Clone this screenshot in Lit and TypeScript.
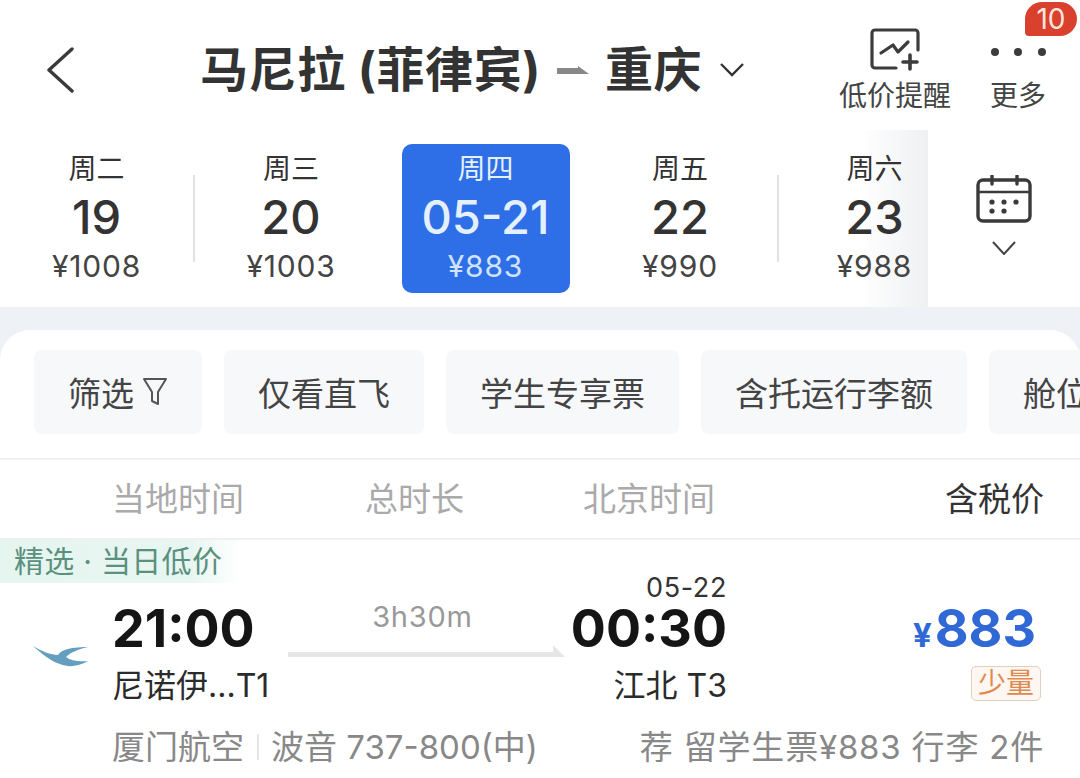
import { css, html, LitElement, TemplateResult } from "lit";
import { customElement } from "lit/decorators.js";
import { classMap } from "lit/directives/class-map.js";

const days = [
  { week: "周二", date: "19", price: "¥1008" },
  { week: "周三", date: "20", price: "¥1003" },
  { week: "周四", date: "05-21", price: "¥883", active: true },
  { week: "周五", date: "22", price: "¥990" },
  { week: "周六", date: "23", price: "¥988" },
];

const filters = ["仅看直飞", "学生专享票", "含托运行李额", "舱位"];

@customElement("app-root")
export default class AppRoot extends LitElement {
  static styles = css`
    :host {
      display: block;
      width: 1080px;
      height: 778px;
      overflow: hidden;
      background: #fff;
      color: #333;
      font-family: Inter, "Noto Sans CJK SC", sans-serif;
    }

    svg {
      display: block;
      flex: none;
    }

    .header {
      height: 130px;
      display: flex;
      box-sizing: border-box;
      padding: 0 34px 0 46px;
    }

    .back {
      margin-top: 47px;
    }

    .title {
      display: flex;
      align-items: center;
      height: 132px;
      margin-left: 124px;
      font-size: 48px;
      font-weight: 700;
      letter-spacing: 0.6px;
      color: #333;
      white-space: nowrap;
    }

    .title svg {
      margin-top: 8px;
    }

    .title .dash {
      margin-left: 16px;
      margin-right: 16px;
    }

    .title .chev {
      margin-left: 18px;
    }

    .action {
      position: relative;
      display: flex;
      flex-direction: column;
      align-items: center;
      font-size: 28px;
      line-height: 40px;
      color: #444;
    }

    .alert {
      margin-left: auto;
      width: 112px;
      padding-top: 28px;
    }

    .alert svg {
      margin-bottom: 4px;
    }

    .more {
      margin-left: 39px;
      width: 56px;
      padding-top: 47px;
    }

    .more svg {
      margin-bottom: 19px;
    }

    .badge {
      position: absolute;
      left: 35px;
      top: 2px;
      width: 52px;
      height: 34px;
      border-radius: 17px 17px 17px 4px;
      background: #d9402e;
      color: #fbe6dc;
      font-size: 28px;
      line-height: 35px;
      text-align: center;
    }

    .dates-row {
      display: flex;
      height: 177px;
    }

    .dates {
      width: 928px;
      flex: none;
      display: flex;
      overflow: hidden;
      background: linear-gradient(to right, #fff 860px, #eef0f2);
    }

    .day {
      flex: none;
      width: 193px;
      display: flex;
      justify-content: center;
      padding-top: 14px;
    }

    .sep {
      flex: none;
      width: 2px;
      height: 87px;
      margin-top: 45px;
      margin-right: -0.5px;
      background: #e2e2e2;
    }

    .sep.hidden {
      background: transparent;
    }

    .day-box {
      width: 168px;
      height: 149px;
      display: flex;
      flex-direction: column;
      align-items: center;
      border-radius: 10px;
    }

    .day-box.active {
      background: #2e6ee6;
      color: #e4f1fd;
    }

    .week {
      font-size: 28px;
      line-height: 50px;
      height: 48px;
    }

    .date {
      font-size: 47px;
      font-weight: 500;
      line-height: 50px;
    }

    .price {
      font-size: 30px;
      line-height: 48px;
      letter-spacing: 0.8px;
      color: #444;
    }

    .active .price {
      color: #cfe3fb;
    }

    .calendar {
      flex: 1;
      display: flex;
      flex-direction: column;
      align-items: center;
      padding-top: 45px;
      gap: 18px;
      box-sizing: border-box;
    }

    .band {
      background: #eef2f6;
      padding-top: 23px;
    }

    .card {
      background: #fff;
      border-radius: 30px 30px 0 0;
      padding-top: 20px;
    }

    .chips {
      display: flex;
      gap: 22px;
      padding: 0 0 24px 34px;
      overflow: hidden;
      border-bottom: 2px solid #eff0f2;
    }

    .chip {
      flex: none;
      height: 84px;
      box-sizing: border-box;
      display: flex;
      align-items: center;
      padding: 0 34px;
      gap: 8px;
      background: #f7f8fa;
      border-radius: 8px;
      font-size: 33px;
      color: #444;
      white-space: nowrap;
    }

    .sort {
      display: grid;
      grid-template-columns: 253px 218px 1fr auto;
      height: 80px;
      box-sizing: border-box;
      padding: 0 36px 4px 112px;
      align-items: center;
      font-size: 33px;
      color: #aaa;
      border-bottom: 2px solid #eff0f2;
    }

    .sort .tax {
      color: #333;
    }

    .tag {
      width: 240px;
      height: 43px;
      box-sizing: border-box;
      padding-left: 14px;
      font-size: 30px;
      line-height: 42px;
      letter-spacing: 0.3px;
      color: #5b907e;
      white-space: nowrap;
      background: linear-gradient(to right, #e5f5ef, #e8f6f1 80%, rgba(255, 255, 255, 0));
    }

    .flight {
      display: grid;
      grid-template-columns: 112px 176px 277px 162px 1fr;
      margin-top: -10px;
      height: 152px;
    }

    .logo {
      padding: 73px 0 0 33px;
    }

    .time {
      font-size: 52px;
      font-weight: 700;
      line-height: 52px;
      color: #151515;
      white-space: nowrap;
    }

    .place {
      font-size: 32px;
      line-height: 44px;
      white-space: nowrap;
      margin-top: 9px;
      color: #2b2b2b;
    }

    .depart {
      padding-top: 30px;
    }

    .middle {
      display: flex;
      flex-direction: column;
      align-items: center;
      font-size: 29px;
      letter-spacing: 0.8px;
      color: #999;
      padding-top: 26px;
      line-height: 36px;
    }

    .middle span {
      margin-right: 8px;
    }

    .middle svg {
      margin-top: 10px;
    }

    .arrive {
      display: flex;
      flex-direction: column;
      align-items: flex-end;
    }

    .next {
      font-size: 27px;
      line-height: 30px;
      letter-spacing: 0.6px;
      color: #333;
      height: 30px;
    }

    .fare {
      display: flex;
      flex-direction: column;
      align-items: flex-end;
      padding: 30px 44px 0 0;
    }

    .amount {
      display: flex;
      align-items: baseline;
      gap: 3px;
      color: #3069d6;
      font-size: 52px;
      font-weight: 700;
      line-height: 52px;
    }

    .amount span {
      font-size: 33px;
    }

    .low {
      margin: 5px -5px 0 0;
      width: 70px;
      height: 35px;
      box-sizing: border-box;
      border: 1px solid #e3cfc2;
      border-radius: 5px;
      background: #fdf6f1;
      color: #e0894f;
      font-size: 28px;
      line-height: 32px;
      text-align: center;
    }

    .meta {
      display: flex;
      justify-content: space-between;
      padding: 0 36px 0 112px;
      font-size: 33px;
      line-height: 44px;
      color: #888;
      white-space: nowrap;
    }

    .meta .left {
      display: flex;
      align-items: center;
    }

    .meta .perk {
      letter-spacing: 0.8px;
    }

    .meta i {
      width: 2px;
      height: 26px;
      margin: 0 12px 0 13px;
      background: #e6e6e6;
    }
  `;

  render() {
    return html`
      ${this.header()}
      <div class="dates-row">
        <div class="dates">${days.map((d, i) => this.day(d, i))}</div>
        <div class="calendar">
          ${this.calendarIcon()}
          <svg width="24" height="14" viewBox="0 0 24 14" fill="none" stroke="#444" stroke-width="2">
            <path d="M1 1l11 12L23 1" />
          </svg>
        </div>
      </div>
      <div class="band">
        <div class="card">
          <div class="chips">
            <div class="chip">
              筛选
              <svg width="26" height="30" viewBox="0 0 26 30" fill="none" stroke="#555" stroke-width="2" stroke-linejoin="round">
                <path d="M2 2h22L16 15v12l-6-3v-9z" />
              </svg>
            </div>
            ${filters.map((f) => html`<div class="chip">${f}</div>`)}
          </div>
          <div class="sort">
            <span>当地时间</span><span>总时长</span><span>北京时间</span>
            <span class="tax">含税价</span>
          </div>
          <div class="tag">精选 · 当日低价</div>
          ${this.flight()}
          <div class="meta">
            <div class="left">厦门航空<i></i>波音 737-800(中)</div>
            <div class="perk">荐 留学生票¥883 行李 2件</div>
          </div>
        </div>
      </div>
    `;
  }

  header(): TemplateResult {
    return html`
      <div class="header">
        <svg class="back" width="30" height="46" viewBox="0 0 30 46" fill="none" stroke="#3a3a3a" stroke-width="3.4" stroke-linecap="round" stroke-linejoin="round">
          <path d="M26 2L3 23l23 21" />
        </svg>
        <div class="title">
          马尼拉 (菲律宾)
          <svg class="dash" width="32" height="8" viewBox="0 0 32 8"><path d="M0 2h21V0l11 8H0z" fill="#888" /></svg>
          重庆
          <svg class="chev" width="24" height="14" viewBox="0 0 24 14" fill="none" stroke="#333" stroke-width="2.4"><path d="M1 1l11 11L23 1" /></svg>
        </div>
        <div class="action alert">
          <svg width="50" height="44" viewBox="0 0 50 44" fill="none" stroke="#3c3c3c" stroke-width="3.2" stroke-linecap="round" stroke-linejoin="round">
            <path d="M48 22V5a3 3 0 0 0-3-3H5a3 3 0 0 0-3 3v32a3 3 0 0 0 3 3h21" />
            <path d="M11 25l12-8 5 7 10-10" />
            <path d="M40 27v14M33 34h14" stroke-width="3.6" />
          </svg>
          低价提醒
        </div>
        <div class="action more">
          <svg width="56" height="10" viewBox="0 0 56 10" fill="#3c3c3c">
            <circle cx="5" cy="5" r="4" /><circle cx="28" cy="5" r="4" /><circle cx="52" cy="5" r="4" />
          </svg>
          更多
          <div class="badge">10</div>
        </div>
      </div>
    `;
  }

  day(d: (typeof days)[number], i: number): TemplateResult {
    const active = !!d.active;
    const nearActive = active || !!days[i + 1]?.active;

    return html`
      <div class="day">
        <div class="day-box ${classMap({ active })}">
          <div class="week">${d.week}</div>
          <div class="date">${d.date}</div>
          <div class="price">${d.price}</div>
        </div>
      </div>
      ${i < days.length - 1
        ? html`<div class="sep ${classMap({ hidden: nearActive })}"></div>`
        : ""}
    `;
  }

  calendarIcon(): TemplateResult {
    return html`
      <svg width="56" height="48" viewBox="0 0 56 48" fill="none" stroke="#3a3a3a" stroke-width="3.4">
        <rect x="2" y="5" width="52" height="41" rx="5" />
        <path d="M2 17h52" stroke-width="2.4" />
        <path d="M16 1v8M41 1v8" stroke-linecap="round" />
        <g fill="#3a3a3a" stroke="none">
          <circle cx="16" cy="27" r="2.6" /><circle cx="28" cy="27" r="2.6" /><circle cx="40" cy="27" r="2.6" />
          <circle cx="16" cy="36" r="2.6" /><circle cx="28" cy="36" r="2.6" />
        </g>
      </svg>
    `;
  }

  flight(): TemplateResult {
    return html`
      <div class="flight">
        <div class="logo">
          <svg width="56" height="22" viewBox="0 0 56 22">
            <path
              d="M0 0C8 5 18 9 25 9C28 5 34 1 55 1C46 3 38 6 33 11C38 15 46 16 55 15C46 20 36 22 27 18C17 15 8 7 0 0z"
              fill="#649fc0"
            />
          </svg>
        </div>
        <div class="depart">
          <div class="time">21:00</div>
          <div class="place">尼诺伊...T1</div>
        </div>
        <div class="middle">
          <span>3h30m</span>
          <svg width="277" height="12" viewBox="0 0 277 12"><path d="M0 7h265V0l12 12H0z" fill="#e6e6e6" /></svg>
        </div>
        <div class="arrive">
          <div class="next">05-22</div>
          <div class="time">00:30</div>
          <div class="place">江北 T3</div>
        </div>
        <div class="fare">
          <div class="amount"><span>¥</span>883</div>
          <div class="low">少量</div>
        </div>
      </div>
    `;
  }
}
